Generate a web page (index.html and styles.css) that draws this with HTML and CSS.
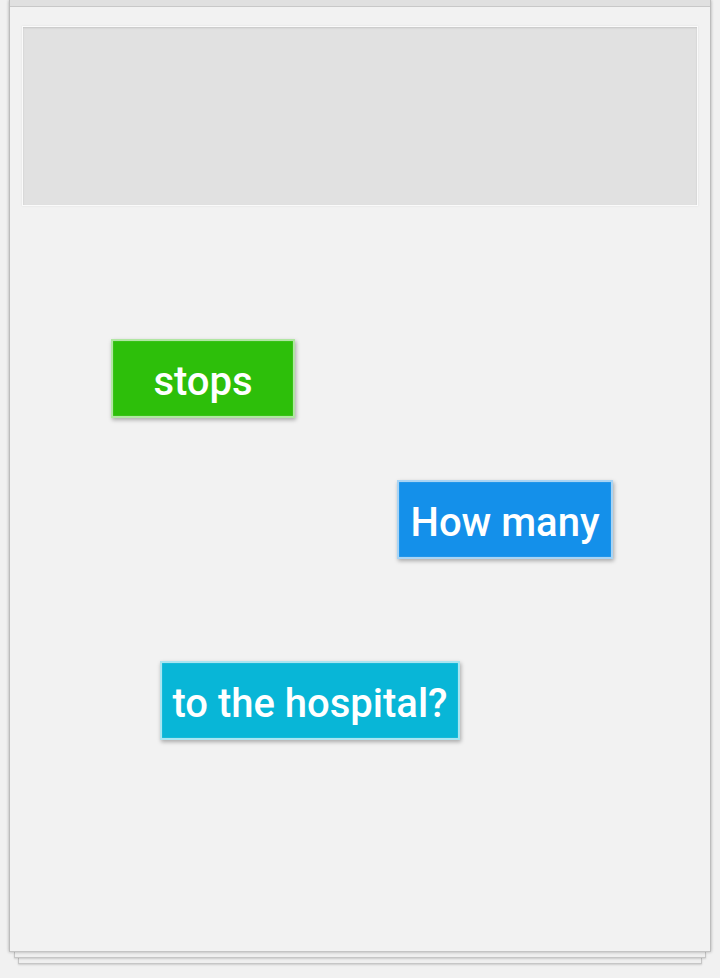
FILE: index.html
```html
<!DOCTYPE html>
<html>
<head>
<meta charset="utf-8">
<link rel="stylesheet" href="styles.css">
</head>
<body>
<div class="page">
  <div class="card">
    <div class="topbar"></div>
    <div class="inner">
      <div class="answer"></div>
      <div class="canvas">
        <div class="tile green" style="left:89px;top:133px;width:184px;">stops</div>
        <div class="tile blue" style="left:375px;top:274px;width:216px;">How many</div>
        <div class="tile cyan" style="left:138px;top:455px;width:300px;">to the hospital?</div>
      </div>
    </div>
  </div>
  <div class="stack s1"></div>
  <div class="stack s2"></div>
</div>
</body>
</html>
```
FILE: styles.css
```css
html, body {
  margin: 0;
  padding: 0;
  background: #f1f1f1;
}
.page {
  width: 720px;
  height: 978px;
  display: flex;
  flex-direction: column;
  align-items: center;
}
.card {
  width: 700px;
  height: 951px;
  background: #f2f2f2;
  border-left: 1px solid #bdbdbd;
  border-right: 1px solid #bdbdbd;
  border-bottom: 1px solid #c4c4c4;
  box-shadow: 0 0 3px rgba(0,0,0,0.3);
  display: flex;
  flex-direction: column;
  position: relative;
  z-index: 3;
}
.topbar {
  height: 6px;
  background: #e0e0e0;
  border-bottom: 1px solid #c8c8c8;
}
.inner {
  padding: 19px 12px 0 12px;
  display: flex;
  flex-direction: column;
  flex: 1;
}
.answer {
  height: 178px;
  background: #e1e1e1;
  border: 1px solid #fafafa;
  box-shadow: inset 0 1px 2px rgba(0,0,0,0.12), 0 0 2px rgba(0,0,0,0.08);
}
.canvas {
  position: relative;
  flex: 1;
}
.tile {
  position: absolute;
  height: 79px;
  box-sizing: border-box;
  display: flex;
  align-items: center;
  justify-content: center;
  color: #ffffff;
  font-family: Roboto, "Liberation Sans", sans-serif;
  font-size: 40px;
  font-weight: 500;
  white-space: nowrap;
  border: 2px solid;
  box-shadow: 1px 2px 4px rgba(0,0,0,0.3), inset 0 0 1px rgba(255,255,255,0.6);
  padding-top: 6px;
}
.green {
  background: #2dbf0a;
  border-color: #b1e6a3;
}
.blue {
  background: #1490ea;
  border-color: #a9d4f4;
}
.cyan {
  background: #08b6d7;
  border-color: #a9e5f1;
}
.stack {
  background: #efefef;
  border: 1px solid #c6c6c6;
  border-top: none;
  box-shadow: 0 1px 2px rgba(0,0,0,0.15);
}
.s1 {
  width: 690px;
  height: 5px;
  position: relative;
  z-index: 2;
}
.s2 {
  width: 682px;
  height: 5px;
  position: relative;
  z-index: 1;
}
```
